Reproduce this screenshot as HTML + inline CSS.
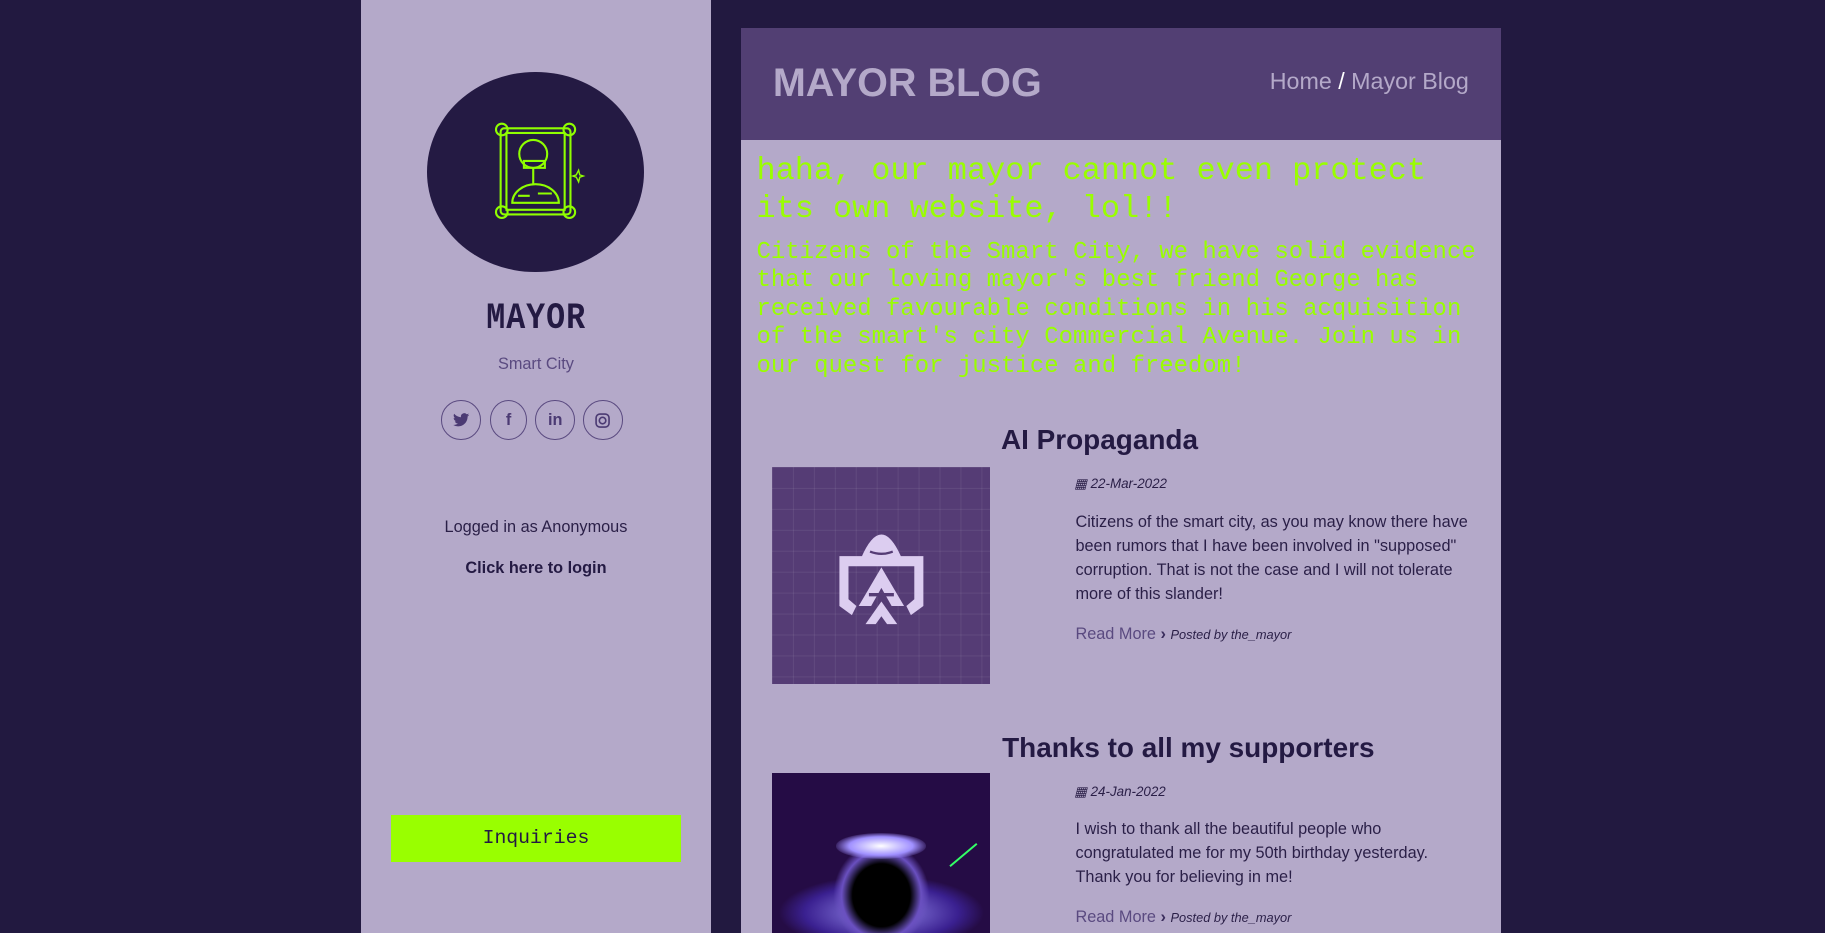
<!DOCTYPE html>
<html><head><meta charset="utf-8"><style>
html{zoom:1.16390}
body{margin:0;width:1568px;height:802px;overflow:hidden;background:#221940;font-family:"Liberation Sans",sans-serif;position:relative}
.a{position:absolute}
#side{left:310px;top:0;width:301px;height:802px;background:#b4a9c9}
#main{left:637px;top:24px;width:653px;height:778px;background:#b4a9c9}
#hdr{left:637px;top:24px;width:653px;height:96px;background:#523f73}
.mono{font-family:"Liberation Mono",monospace}
.soc{width:34px;height:34px;border:1px solid #5a4a80;border-radius:50%;box-sizing:border-box;display:flex;align-items:center;justify-content:center;color:#4b3a73;font-weight:bold;font-size:14px;top:344px}
.g{color:#99ff00}
.t{color:#2a1f47;font-size:14px;line-height:20.7px}
</style></head><body>
<div id="side" class="a"></div>
<div class="a" style="left:367px;top:62px;width:186px;height:172px;border-radius:50%;background:#241a43"></div>
<svg class="a" style="left:420px;top:102px" width="90" height="90" viewBox="0 0 90 90" fill="none" stroke="#8fff00" stroke-width="1.8">
<rect x="10" y="8" width="60" height="74" rx="3"/><rect x="15" y="12" width="50" height="66"/>
<circle cx="11" cy="9" r="5"/><circle cx="69" cy="9" r="5"/><circle cx="11" cy="80" r="5"/><circle cx="69" cy="80" r="5"/>
<circle cx="38" cy="30" r="12"/><path d="M30 36h18v6H30zM38 42v14"/><path d="M20 72a20 16 0 0 1 40 0z"/><path d="M25 66h10M42 64h12"/>
<path d="M75 48l2 -4 1 4 3 1-3 1-1 4-2-4-3-1z" stroke-width="1.2"/></svg>
<div class="a mono" style="left:310px;width:301px;top:254px;text-align:center;font-size:32px;font-weight:bold;color:#241a43;letter-spacing:1px;line-height:40px;transform:scaleX(0.85)">MAYOR</div>
<div class="a" style="left:310px;width:301px;top:305px;text-align:center;font-size:14px;color:#5a4a80">Smart City</div>
<div class="a soc" style="left:379px">
<svg width="14" height="12" viewBox="0 0 24 20"><path fill="#4b3a73" d="M24 2.4a10 10 0 0 1-2.8.8A5 5 0 0 0 23.3.4a10 10 0 0 1-3.1 1.2A4.9 4.9 0 0 0 11.8 6 14 14 0 0 1 1.7.9a4.9 4.9 0 0 0 1.5 6.6A4.9 4.9 0 0 1 1 6.9a4.9 4.9 0 0 0 3.9 4.8 5 5 0 0 1-2.2.1 4.9 4.9 0 0 0 4.6 3.4A9.9 9.9 0 0 1 0 17.3 14 14 0 0 0 7.5 19.5c9 0 14-7.5 14-14v-.6A10 10 0 0 0 24 2.4z"/></svg></div>
<div class="a soc" style="left:421px;width:32px">f</div>
<div class="a soc" style="left:460px">in</div>
<div class="a soc" style="left:501px"><svg width="13" height="13" viewBox="0 0 14 14" fill="none" stroke="#4b3a73" stroke-width="1.5"><rect x="1" y="1" width="12" height="12" rx="3.5"/><circle cx="7" cy="7" r="3"/></svg></div>
<div class="a" style="left:310px;width:301px;top:445px;text-align:center;font-size:14px;color:#2a1f47">Logged in as Anonymous</div>
<div class="a" style="left:310px;width:301px;top:480px;text-align:center;font-size:14px;font-weight:bold;color:#241a43">Click here to login</div>
<div class="a mono" style="left:336px;top:700px;width:249px;height:41px;background:#99ff00;color:#241a43;font-size:17px;line-height:41px;text-align:center">Inquiries</div>

<div id="main" class="a"></div>
<div id="hdr" class="a"></div>
<div class="a" style="left:664px;top:52px;font-size:34px;font-weight:bold;color:#b4a9c9">MAYOR BLOG</div>
<div class="a" style="right:306px;top:58px;font-size:20px;color:#b4a9c9">Home <span style="color:#fff">/</span> Mayor Blog</div>

<div class="a mono g" style="left:650px;top:131px;font-size:27.4px;line-height:32px;width:640px">haha, our mayor cannot even protect<br>its own website, lol!!</div>
<div class="a mono g" style="left:650px;top:205px;font-size:20.6px;line-height:24.6px;width:640px">Citizens of the Smart City, we have solid evidence<br>that our loving mayor's best friend George has<br>received favourable conditions in his acquisition<br>of the smart's city Commercial Avenue. Join us in<br>our quest for justice and freedom!</div>

<div class="a" style="left:860px;top:364px;font-size:24px;font-weight:bold;color:#241a43">AI Propaganda</div>
<div class="a" style="left:663px;top:401px;width:188px;height:187px;background-color:#553c75;background-image:linear-gradient(rgba(255,255,255,.07) 1px,transparent 1px),linear-gradient(90deg,rgba(255,255,255,.07) 1px,transparent 1px);background-size:18px 18px"></div>
<svg class="a" style="left:718px;top:449px" width="78" height="90" viewBox="0 0 80 90">
<path d="M22 30 Q40 -12 58 30 Z" fill="#dccdf0"/><path d="M30 24 Q40 28 50 24" stroke="#553c75" stroke-width="2" fill="none"/>
<path d="M3 28H77V72L66 80 62 72 69 66V37H11V66L18 72 14 80 3 72Z" fill="#dccdf0"/>
<path d="M40 38 L60 72 H49 L40 56 31 72 H20Z" fill="#dccdf0"/><path d="M29 62h22" stroke="#553c75" stroke-width="3"/>
<path d="M40 68 L54 88 H45 L40 81 35 88 H26Z" fill="#dccdf0"/></svg>
<div class="a" style="left:923px;top:409px;font-size:11.5px;font-style:italic;color:#2a1f47">&#9638; 22-Mar-2022</div>
<div class="a t" style="left:924px;top:438px;width:340px">Citizens of the smart city, as you may know there have been rumors that I have been involved in "supposed" corruption. That is not the case and I will not tolerate more of this slander!</div>
<div class="a" style="left:924px;top:537px;font-size:14px;color:#5a4a80">Read More <b style="color:#3a2d5c">›</b> <i style="font-size:11px;color:#2a1f47">Posted by the_mayor</i></div>

<div class="a" style="left:861px;top:629px;font-size:24px;font-weight:bold;color:#241a43">Thanks to all my supporters</div>
<div class="a" style="left:663px;top:664px;width:188px;height:138px;background:radial-gradient(ellipse 55px 60px at 94px 105px,#000 45%,#6a50c0 62%,transparent 75%),radial-gradient(ellipse 110px 40px at 94px 120px,#9a90f0,#3a2090 60%,transparent 80%),#250c45;overflow:hidden">
<div style="position:absolute;left:55px;top:52px;width:78px;height:22px;border-radius:50%;background:radial-gradient(#fff,#a090ff 50%,transparent 75%)"></div>
<div style="position:absolute;left:150px;top:70px;width:30px;height:2px;background:#3f6;transform:rotate(-40deg)"></div></div>
<div class="a" style="left:923px;top:674px;font-size:11.5px;font-style:italic;color:#2a1f47">&#9638; 24-Jan-2022</div>
<div class="a t" style="left:924px;top:702px;width:320px">I wish to thank all the beautiful people who congratulated me for my 50th birthday yesterday. Thank you for believing in me!</div>
<div class="a" style="left:924px;top:780px;font-size:14px;color:#5a4a80">Read More <b style="color:#3a2d5c">›</b> <i style="font-size:11px;color:#2a1f47">Posted by the_mayor</i></div>
</body></html>
